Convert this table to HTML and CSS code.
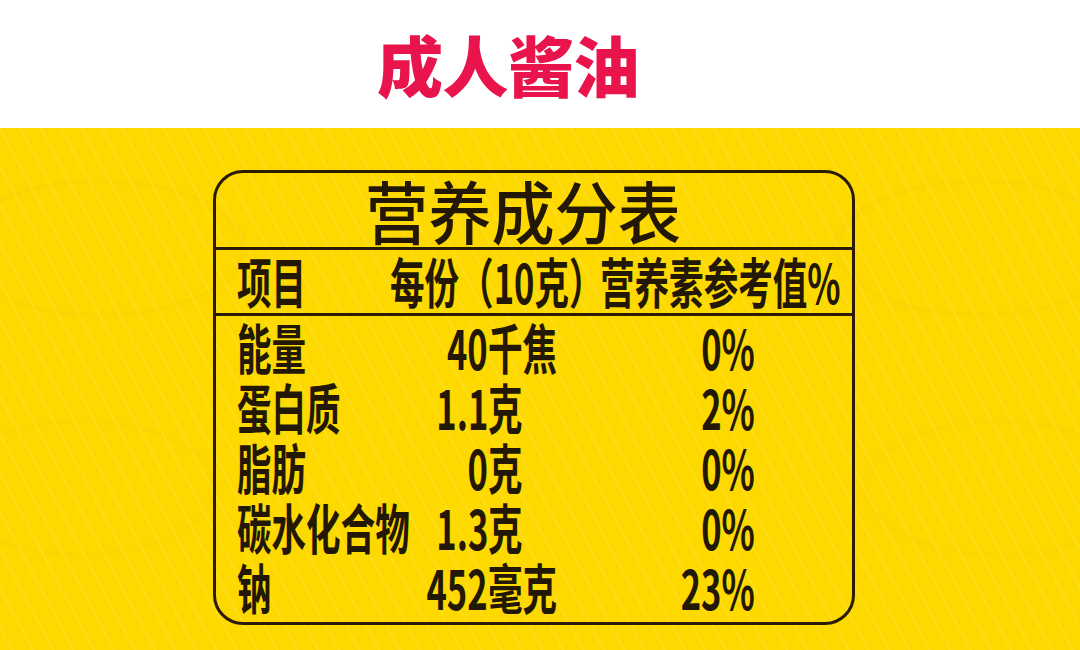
FILE: index.html
```html
<!DOCTYPE html>
<html lang="zh-CN">
<head>
<meta charset="utf-8">
<title>成人酱油</title>
<link rel="stylesheet" href="styles.css">
</head>
<body>
<div class="page">
  <header class="top">
    <h1 class="title">成人酱油</h1>
  </header>
  <section class="label">
    <div class="panel">
      <div class="panel-title"><span class="t">营养成分表</span></div>
      <div class="head-row">
        <div class="cell"><span class="c">项目</span></div>
        <div class="cell"><span class="c">每份（10克）</span></div>
        <div class="cell"><span class="c">营养素参考值%</span></div>
      </div>
      <div class="body">
        <div class="row">
          <div class="name"><span class="c">能量</span></div>
          <div class="num"><span class="c r">40</span></div>
          <div class="unit"><span class="c">千焦</span></div>
          <div class="pct"><span class="c r">0%</span></div>
        </div>
        <div class="row">
          <div class="name"><span class="c">蛋白质</span></div>
          <div class="num"><span class="c r">1.1</span></div>
          <div class="unit"><span class="c">克</span></div>
          <div class="pct"><span class="c r">2%</span></div>
        </div>
        <div class="row">
          <div class="name"><span class="c">脂肪</span></div>
          <div class="num"><span class="c r">0</span></div>
          <div class="unit"><span class="c">克</span></div>
          <div class="pct"><span class="c r">0%</span></div>
        </div>
        <div class="row">
          <div class="name"><span class="c">碳水化合物</span></div>
          <div class="num"><span class="c r">1.3</span></div>
          <div class="unit"><span class="c">克</span></div>
          <div class="pct"><span class="c r">0%</span></div>
        </div>
        <div class="row">
          <div class="name"><span class="c">钠</span></div>
          <div class="num"><span class="c r">452</span></div>
          <div class="unit"><span class="c">毫克</span></div>
          <div class="pct"><span class="c r">23%</span></div>
        </div>
      </div>
    </div>
  </section>
</div>
</body>
</html>
```
FILE: styles.css
```css
* { box-sizing: border-box; }
html, body { margin: 0; padding: 0; }
body {
  width: 1080px;
  height: 650px;
  overflow: hidden;
  background: #ffffff;
  font-family: "Noto Sans CJK SC", "Noto Sans", sans-serif;
}
.page { width: 1080px; height: 650px; display: flex; flex-direction: column; }

.top {
  height: 128px;
  background: #ffffff;
  padding: 30px 0 0 377px;
}
.title {
  margin: 0;
  font-size: 66px;
  line-height: 1;
  font-weight: 900;
  color: #e8144b;
  letter-spacing: -0.5px;
}

.label {
  flex: 1;
  padding: 42px 0 0 213px;
  background-color: #fed900;
  background-image:
    repeating-linear-gradient(62deg, rgba(255,255,255,0) 0 10px, rgba(255,236,110,0.22) 10px 12px, rgba(255,255,255,0) 12px 18px),
    radial-gradient(ellipse 150px 70px at 100px 120px, rgba(0,0,0,0) 0 92%, rgba(232,192,0,0.14) 94% 97%, rgba(0,0,0,0) 99%),
    radial-gradient(ellipse 150px 70px at 980px 120px, rgba(0,0,0,0) 0 92%, rgba(232,192,0,0.14) 94% 97%, rgba(0,0,0,0) 99%),
    radial-gradient(ellipse 140px 70px at 80px 360px, rgba(0,0,0,0) 0 92%, rgba(232,192,0,0.12) 94% 97%, rgba(0,0,0,0) 99%),
    radial-gradient(ellipse 140px 70px at 1000px 360px, rgba(0,0,0,0) 0 92%, rgba(232,192,0,0.12) 94% 97%, rgba(0,0,0,0) 99%);
}

.panel {
  width: 642px;
  height: 455px;
  border: 3px solid #2a1c06;
  border-radius: 30px;
  color: #231806;
  font-weight: 700;
}

.c {
  display: inline-block;
  white-space: nowrap;
  font-size: 54px;
  line-height: 1;
  transform: scaleX(0.64);
  transform-origin: left center;
}
.c.r { transform-origin: right center; }

.panel-title {
  height: 77px;
  border-bottom: 3px solid #2a1c06;
  display: flex;
  align-items: center;
  justify-content: center;
  padding-right: 22px;
}
.t {
  display: inline-block;
  font-size: 68px;
  font-weight: 500;
  line-height: 1;
  white-space: nowrap;
  transform: scaleX(0.93);
}

.head-row {
  height: 66px;
  border-bottom: 3px solid #2a1c06;
  display: grid;
  grid-template-columns: 153px 210px 1fr;
  align-items: center;
  padding-left: 21px;
}
.head-row .cell { white-space: nowrap; }

.body { padding-top: 1px; }
.row {
  height: 60px;
  display: grid;
  grid-template-columns: 151px 100px 112px 155px;
  align-items: center;
  padding-left: 21px;
}
.name, .unit { text-align: left; white-space: nowrap; }
.num, .pct { text-align: right; white-space: nowrap; }
```
